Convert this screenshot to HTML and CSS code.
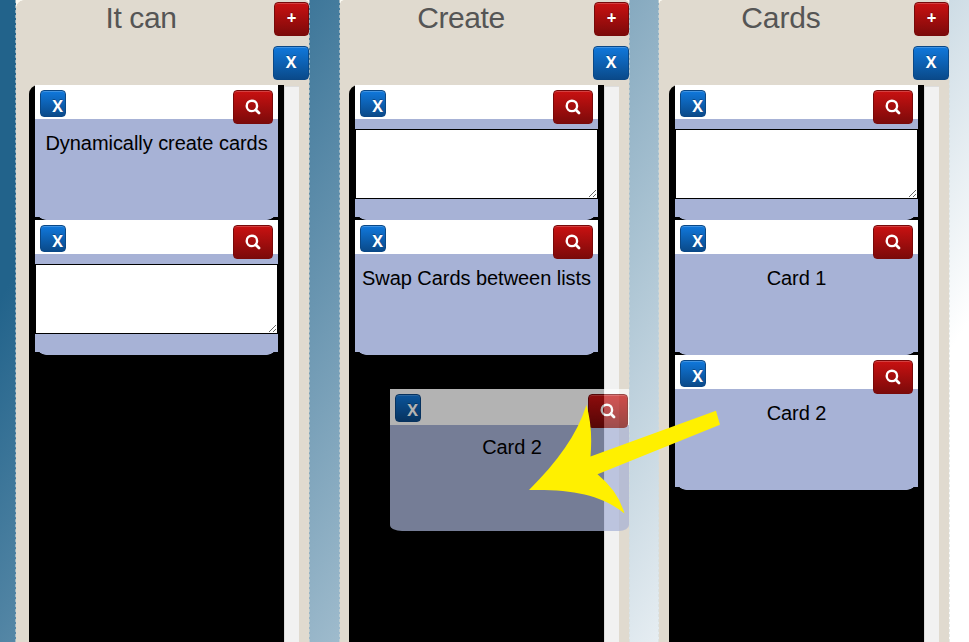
FILE: index.html
```html
<!DOCTYPE html>
<html lang="en">
<head>
<meta charset="utf-8">
<title>Card board</title>
<link rel="stylesheet" href="styles.css">
</head>
<body>
<svg class="defs" width="0" height="0"><symbol id="search" viewBox="0 0 16 16"><circle cx="6.9" cy="6.9" r="5.2" fill="none" stroke="currentColor" stroke-width="2.4"/><path d="M10.8 10.8L14 14" stroke="currentColor" stroke-width="2.8" stroke-linecap="round"/></symbol></svg>
<main class="board">
  <div class="slot"><section class="column first">
    <header class="head"><h2>It can</h2><div class="actions"><button class="btn red add">+</button><button class="btn blue close">X</button></div></header>
    <div class="list"><div class="cards">
      <article class="card"><div class="bar"><button class="btn blue remove">X</button><button class="btn red find"><svg><use href="#search"/></svg></button></div><div class="body"><p>Dynamically create cards</p></div></article>
      <article class="card"><div class="bar"><button class="btn blue remove">X</button><button class="btn red find"><svg><use href="#search"/></svg></button></div><div class="body"><textarea></textarea></div></article>
    </div><div class="track"></div></div>
  </section></div>
  <div class="slot"><section class="column second">
    <header class="head"><h2>Create</h2><div class="actions"><button class="btn red add">+</button><button class="btn blue close">X</button></div></header>
    <div class="list"><div class="cards">
      <article class="card"><div class="bar"><button class="btn blue remove">X</button><button class="btn red find"><svg><use href="#search"/></svg></button></div><div class="body"><textarea></textarea></div></article>
      <article class="card"><div class="bar"><button class="btn blue remove">X</button><button class="btn red find"><svg><use href="#search"/></svg></button></div><div class="body"><p>Swap Cards between lists</p></div></article>
    </div><div class="track"></div></div>
  </section></div>
  <div class="slot"><section class="column third">
    <header class="head"><h2>Cards</h2><div class="actions"><button class="btn red add">+</button><button class="btn blue close">X</button></div></header>
    <div class="list"><div class="cards">
      <article class="card"><div class="bar"><button class="btn blue remove">X</button><button class="btn red find"><svg><use href="#search"/></svg></button></div><div class="body"><textarea></textarea></div></article>
      <article class="card"><div class="bar"><button class="btn blue remove">X</button><button class="btn red find"><svg><use href="#search"/></svg></button></div><div class="body"><p>Card 1</p></div></article>
      <article class="card"><div class="bar"><button class="btn blue remove">X</button><button class="btn red find"><svg><use href="#search"/></svg></button></div><div class="body"><p>Card 2</p></div></article>
    </div><div class="track"></div></div>
  </section></div>
</main>
<div class="drag"><article class="card ghost"><div class="bar"><button class="btn blue remove">X</button><button class="btn red find"><svg><use href="#search"/></svg></button></div><div class="body"><p>Card 2</p></div></article></div>
<svg class="arrow" viewBox="0 0 192 110"><path d="M0 85C28 57 48 30 57.5 0Q64 23 61.5 51.5L187 5.7L191 19.7L68.5 69.3Q89 86 95.5 108.5C73 90 43 84 0 85Z" fill="#fff000"/></svg>
</body>
</html>
```

FILE: styles.css
```css
* { box-sizing: border-box; }
body {
  margin: 0;
  width: 969px;
  height: 642px;
  overflow: hidden;
  font-family: "Liberation Sans", Arial, sans-serif;
  background: linear-gradient(122deg, #22638b 158px, #fff 992px);
}
.defs { position: absolute; }
.board { display: flex; width: 969px; height: 642px; overflow: hidden; }
.slot { flex: 0 0 320px; padding-left: 15px; }
.column {
  --corner: 4px;
  width: 295px;
  height: 642px;
  border: dashed rgba(215, 220, 215, .6);
  border-width: 0 1px;
  background:
    radial-gradient(circle at 100% 100%, #e0dacf calc(var(--corner) - .5px), #fbfaf2 var(--corner)) left top / var(--corner) var(--corner) no-repeat,
    radial-gradient(circle at 0 100%, #e0dacf 2px, #fbfaf2 3px) right top / 3px 3px no-repeat,
    #e0dacf;
  background-clip: padding-box;
  display: flex;
  flex-direction: column;
  padding-left: 13px;
}
.first { --corner: 8px; }
.second { width: 291px; margin-left: 4px; padding-left: 9px; }
.third { width: 292px; margin-left: 3px; padding-left: 10px; }
.head { display: flex; height: 85px; flex: none; }
h2 {
  margin: 0;
  padding-top: 1px;
  width: 224px;
  margin-right: 20px;
  text-align: center;
  font-size: 30px;
  line-height: 33px;
  font-weight: 400;
  letter-spacing: -.4px;
  color: #555;
}
.third h2 { letter-spacing: -.1px; }
.actions { flex: 1; display: flex; flex-direction: column; align-items: flex-end; gap: 10px; padding-top: 2px; }
.btn {
  display: flex;
  align-items: center;
  justify-content: center;
  height: 34px;
  padding: 0;
  border-radius: 4px;
  color: #fff;
  font: bold 16px/20px "Open Sans", sans-serif;
  text-shadow: 0 -1px 0 rgba(0, 0, 0, .3);
  box-shadow: inset 0 1px 0 rgba(255, 255, 255, .2);
}
.red { background: linear-gradient(#c91111, #7c0a0a); border: 1px solid #780a0a; }
.blue { background: linear-gradient(#1078dc, #0a4a8a); border: 1px solid #0a4887; }
.add { width: 35px; padding-bottom: 2px; font-size: 17px; }
.close { width: 36px; padding-bottom: 2px; }
.list { display: flex; flex: 1; width: 270px; }
.cards { width: 255px; padding-left: 6px; background: #000; border-top-left-radius: 9px; }
.track { width: 15px; margin-top: 1px; background: #f1f1f1; border-left: 1px solid #ddd; border-top: 1px solid #ddd; }
.card { width: 243px; height: 135px; display: flex; flex-direction: column; }
.bar { position: relative; z-index: 1; flex: none; display: flex; justify-content: space-between; align-items: flex-start; height: 34px; padding: 5px 5px 0; background: #fff; }
.remove { width: 26px; height: 27px; padding: 4px 0 0 9px; }
.find { width: 40px; flex: none; }
.find svg { width: 16px; height: 16px; }
.body {
  flex: 1;
  background:
    radial-gradient(circle at 12px -9px, transparent 11.5px, #000 12.2px) left bottom / 12px 3px no-repeat,
    radial-gradient(circle at 0 -9px, transparent 11.5px, #000 12.2px) right bottom / 12px 3px no-repeat,
    #a7b2d6;
}
p { margin: 12px 0 0; text-align: center; font-size: 20px; line-height: 24px; letter-spacing: -.05px; }
.body:has(textarea) { padding-top: 1px; }
textarea { display: block; width: 243px; height: 70px; margin: 9px 0 0; border: 1px solid #000; background: #fff; resize: both; }
.drag { position: absolute; left: 390px; top: 389px; width: 239px; height: 142px; overflow: hidden; opacity: .7; }
.ghost { width: 239px; height: 142px; border-radius: 0 0 10px 12px / 0 0 6px 6px; overflow: hidden; }
.ghost .bar { height: 36px; padding-right: 1px; }
.ghost .remove { height: 28px; }
.ghost .body { background: #a7b2d6; }
.ghost p { margin-top: 10px; width: 244px; }
.arrow { position: absolute; left: 529px; top: 405px; width: 192px; height: 110px; }
```
